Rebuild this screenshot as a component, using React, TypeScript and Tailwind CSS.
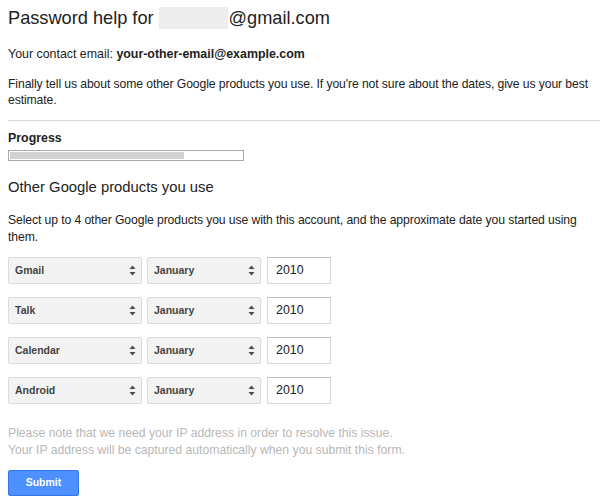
import React from "react";

const rows = [
  { product: "Gmail", month: "January", year: "2010" },
  { product: "Talk", month: "January", year: "2010" },
  { product: "Calendar", month: "January", year: "2010" },
  { product: "Android", month: "January", year: "2010" },
];

function Arrows() {
  return (
    <svg width="7" height="11" viewBox="0 0 7 11" className="shrink-0">
      <path d="M3.5 0.5 L6.5 4 L0.5 4 Z" fill="#4a4a4a" />
      <path d="M3.5 10.5 L6.5 7 L0.5 7 Z" fill="#4a4a4a" />
    </svg>
  );
}

function FakeSelect({ label, width }: { label: string; width: string }) {
  return (
    <div
      className={`${width} h-[27px] flex items-center justify-between pl-[6px] pr-[5px] bg-[#f3f3f3] border border-[#dcdcdc] rounded-[2px] text-[10.5px] font-bold text-[#444]`}
    >
      <span>{label}</span>
      <Arrows />
    </div>
  );
}

export default function App() {
  return (
    <div
      className="w-[600px] h-[504px] bg-white text-[#222] overflow-hidden pl-[8px] pt-[5px]"
      style={{ fontFamily: "Arial, 'Liberation Sans', sans-serif" }}
    >
      <h1 className="h-[26px] text-[18.2px] leading-[26px] font-normal text-[#222] flex items-center">
        <span>Password help for</span>
        <span className="inline-block w-[69px] h-[22px] ml-[5px] mr-[1px] bg-[#ededed]" />
        <span>@gmail.com</span>
      </h1>

      <p className="mt-[15px] text-[12.4px] leading-[16px]">
        Your contact email: <b>your-other-email@example.com</b>
      </p>

      <p className="mt-[14px] text-[12.2px] leading-[16px] tracking-[-0.1px]">
        Finally tell us about some other Google products you use. If you're not sure about the dates, give us your best
        estimate.
      </p>

      <div className="mt-[12px] h-px bg-[#d6d6d6] -mr-[8px]" />

      <div className="mt-[9px] text-[12.4px] leading-[16px] font-bold">Progress</div>
      <div className="mt-[4px] w-[236px] h-[11px] border border-[#a9a9a9] bg-white p-px">
        <div className="h-full w-[174px] bg-[#d2d2d2]" />
      </div>

      <h2 className="mt-[15px] text-[14.8px] leading-[22px] font-normal">Other Google products you use</h2>

      <p className="mt-[14px] text-[12.2px] leading-[17px] tracking-[-0.1px]">
        Select up to 4 other Google products you use with this account, and the approximate date you started using
        them.
      </p>

      <div className="mt-[11px] flex flex-col gap-[13px]">
        {rows.map((r) => (
          <div key={r.product} className="flex items-center">
            <FakeSelect label={r.product} width="w-[134px]" />
            <div className="w-[5px]" />
            <FakeSelect label={r.month} width="w-[114px]" />
            <div className="w-[6px]" />
            <div className="w-[64px] h-[27px] border border-[#d9d9d9] border-t-[#c0c0c0] bg-white flex items-center pl-[8px] text-[12.4px]">
              {r.year}
            </div>
          </div>
        ))}
      </div>

      <p className="mt-[21px] text-[12.2px] leading-[17px] text-[#b8b8b8]">
        Please note that we need your IP address in order to resolve this issue.
        <br />
        Your IP address will be captured automatically when you submit this form.
      </p>

      <button className="mt-[11px] block w-[71px] h-[26px] rounded-[2px] bg-[#4d90fe] border border-[#3079ed] text-white text-[10.5px] font-bold">
        Submit
      </button>
    </div>
  );
}
